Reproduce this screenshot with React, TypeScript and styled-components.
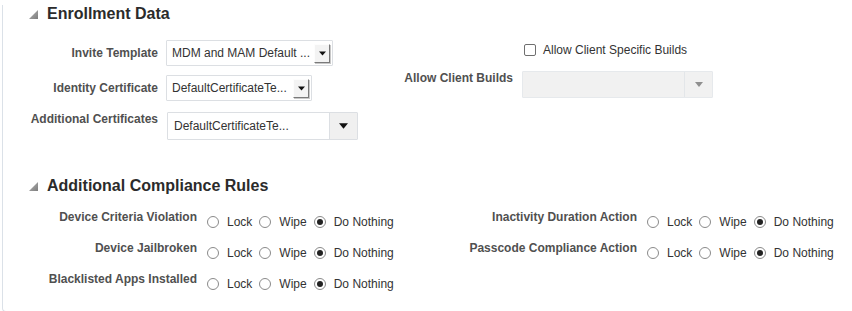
import React from "react";
import styled, { createGlobalStyle } from "styled-components";

const GlobalStyle = createGlobalStyle`
  html, body {
    margin: 0;
    padding: 0;
    background: #ffffff;
  }
  body {
    font-family: "Liberation Sans", Arial, sans-serif;
    font-size: 12px;
    color: #333333;
    overflow: hidden;
  }
`;

const RULES_LEFT = [
  "Device Criteria Violation",
  "Device Jailbroken",
  "Blacklisted Apps Installed"
];
const RULES_RIGHT = ["Inactivity Duration Action", "Passcode Compliance Action"];
const OPTIONS = ["Lock", "Wipe", "Do Nothing"];

const App = () => {
  return (
    <>
      <GlobalStyle />
      <StyledPanel>
        <StyledHeader>
          <Disclosure />
          <StyledTitle>Enrollment Data</StyledTitle>
        </StyledHeader>
        <StyledEnrollmentBody>
          <StyledFormBlock>
            <StyledFieldRow>
              <StyledLabel width={155}>Invite Template</StyledLabel>
              <StyledSelect width={167} height={26}>
                <StyledSelectText>MDM and MAM Default ...</StyledSelectText>
                <StyledBevelButton>
                  <Arrow size={7} color="#111" />
                </StyledBevelButton>
              </StyledSelect>
            </StyledFieldRow>
            <StyledFieldRow gap={9}>
              <StyledLabel width={155}>Identity Certificate</StyledLabel>
              <StyledSelect width={146} height={26}>
                <StyledSelectText>DefaultCertificateTe...</StyledSelectText>
                <StyledBevelButton>
                  <Arrow size={7} color="#111" />
                </StyledBevelButton>
              </StyledSelect>
            </StyledFieldRow>
            <StyledFieldRow gap={11} top>
              <StyledLabel width={155}>Additional Certificates</StyledLabel>
              <StyledSelect width={191} height={28} shift={1}>
                <StyledSelectText pad={6}>DefaultCertificateTe...</StyledSelectText>
                <StyledFlatButton>
                  <Arrow size={9} color="#111" />
                </StyledFlatButton>
              </StyledSelect>
            </StyledFieldRow>
          </StyledFormBlock>
          <StyledFormBlock>
            <StyledCheckRow>
              <StyledSpacer width={143} />
              <StyledCheckbox />
              <StyledCheckText>Allow Client Specific Builds</StyledCheckText>
            </StyledCheckRow>
            <StyledFieldRow gap={11} top>
              <StyledLabel width={132} right={9}>
                Allow Client Builds
              </StyledLabel>
              <StyledSelect width={191} height={27} disabled>
                <StyledSelectText />
                <StyledFlatButton disabled>
                  <Arrow size={8} color="#8f8f8f" />
                </StyledFlatButton>
              </StyledSelect>
            </StyledFieldRow>
          </StyledFormBlock>
        </StyledEnrollmentBody>

        <StyledHeader second>
          <Disclosure />
          <StyledTitle>Additional Compliance Rules</StyledTitle>
        </StyledHeader>
        <StyledRulesBody>
          <StyledRulesColumn width={417}>
            {RULES_LEFT.map(rule => (
              <RuleRow key={rule} label={rule} labelWidth={194} />
            ))}
          </StyledRulesColumn>
          <StyledRulesColumn>
            {RULES_RIGHT.map(rule => (
              <RuleRow key={rule} label={rule} labelWidth={217} />
            ))}
          </StyledRulesColumn>
        </StyledRulesBody>
      </StyledPanel>
    </>
  );
};

const RuleRow = ({ label, labelWidth }: { label: string; labelWidth: number }) => (
  <StyledRuleRow>
    <StyledLabel width={labelWidth} right={10}>
      {label}
    </StyledLabel>
    <StyledRadioGroup>
      {OPTIONS.map(opt => (
        <StyledOption key={opt}>
          <StyledRadio checked={opt === "Do Nothing"} />
          <StyledOptionText>{opt}</StyledOptionText>
        </StyledOption>
      ))}
    </StyledRadioGroup>
  </StyledRuleRow>
);

const Disclosure = () => (
  <svg width="9" height="9" viewBox="0 0 9 9" style={{ marginRight: 9 }}>
    <defs>
      <linearGradient id="disc" x1="0" y1="0" x2="1" y2="1">
        <stop offset="0" stopColor="#b5b5b5" />
        <stop offset="1" stopColor="#7d7d7d" />
      </linearGradient>
    </defs>
    <polygon points="9,0 9,9 0,9" fill="url(#disc)" />
  </svg>
);

const Arrow = ({ size, color }: { size: number; color: string }) => (
  <svg width={size} height={Math.ceil(size / 2) + 1} viewBox="0 0 10 6">
    <polygon points="0,0 10,0 5,6" fill={color} />
  </svg>
);

export default App;

const StyledPanel = styled.div`
  margin-left: 2px;
  border-left: 1px solid #dbe1e8;
  border-bottom: 1px solid #dbe1e8;
  border-bottom-left-radius: 4px;
  box-sizing: border-box;
  height: 307px;
`;

const StyledHeader = styled.div<{ second?: boolean }>`
  display: flex;
  align-items: center;
  padding-left: 26px;
  margin-top: ${p => (p.second ? "37px" : "5px")};
  height: 18px;
`;

const StyledTitle = styled.div`
  font-size: 16px;
  font-weight: 700;
  line-height: 18px;
  color: #2b2b2b;
`;

const StyledEnrollmentBody = styled.div`
  display: flex;
  gap: 23px;
  margin-top: 17px;
`;

const StyledFormBlock = styled.div`
  display: flex;
  flex-direction: column;
`;

const StyledFieldRow = styled.div<{ gap?: number; top?: boolean }>`
  display: flex;
  align-items: ${p => (p.top ? "flex-start" : "center")};
  margin-top: ${p => p.gap || 0}px;
`;

const StyledLabel = styled.div<{ width: number; right?: number }>`
  width: ${p => p.width}px;
  margin-right: ${p => (p.right !== undefined ? p.right : 8)}px;
  text-align: right;
  font-weight: 700;
  font-size: 12px;
  line-height: 14px;
  color: #505050;
  white-space: nowrap;
  flex-shrink: 0;
`;

const StyledSelect = styled.div<{
  width: number;
  height: number;
  shift?: number;
  disabled?: boolean;
}>`
  display: flex;
  align-items: center;
  box-sizing: border-box;
  width: ${p => p.width}px;
  height: ${p => p.height}px;
  margin-left: ${p => p.shift || 0}px;
  border: 1px solid ${p => (p.disabled ? "#e6e9ec" : "#dcdfe3")};
  background: ${p => (p.disabled ? "#f1f1f1" : "#ffffff")};
  border-radius: 1px;
`;

const StyledSelectText = styled.div<{ pad?: number }>`
  flex: 1;
  padding-left: ${p => p.pad || 5}px;
  font-size: 12px;
  color: #333;
  white-space: nowrap;
  overflow: hidden;
`;

const StyledBevelButton = styled.div`
  display: flex;
  align-items: center;
  justify-content: center;
  box-sizing: border-box;
  width: 16px;
  height: 19px;
  margin-right: 2px;
  background: #f3f3f3;
  border-top: 1px solid #fdfdfd;
  border-left: 1px solid #fdfdfd;
  border-right: 1px solid #7a7a7a;
  border-bottom: 1px solid #7a7a7a;
  box-shadow: 1px 1px 0 #c8c8c8;
`;

const StyledFlatButton = styled.div<{ disabled?: boolean }>`
  display: flex;
  align-items: center;
  justify-content: center;
  align-self: stretch;
  width: 27px;
  background: ${p => (p.disabled ? "#f1f1f1" : "#f0f0f0")};
  border-left: 1px solid ${p => (p.disabled ? "#e3e6e9" : "#dcdfe3")};
`;

const StyledCheckRow = styled.div`
  display: flex;
  align-items: center;
  height: 20px;
`;

const StyledSpacer = styled.div<{ width: number }>`
  width: ${p => p.width}px;
  flex-shrink: 0;
`;

const StyledCheckbox = styled.div`
  box-sizing: border-box;
  width: 12px;
  height: 12px;
  border: 1px solid #6f6f6f;
  border-radius: 2px;
  background: #fff;
`;

const StyledCheckText = styled.span`
  margin-left: 7px;
  font-size: 12px;
  color: #333;
  white-space: nowrap;
`;

const StyledRulesBody = styled.div`
  display: flex;
  margin-top: 15px;
`;

const StyledRulesColumn = styled.div<{ width?: number }>`
  display: flex;
  flex-direction: column;
  width: ${p => (p.width ? `${p.width}px` : "auto")};
  flex-shrink: 0;
`;

const StyledRuleRow = styled.div`
  display: flex;
  align-items: flex-start;
  height: 31px;
`;

const StyledRadioGroup = styled.div`
  display: flex;
  align-items: center;
  padding-top: 5px;
  line-height: 14px;
  white-space: nowrap;
`;

const StyledOption = styled.label`
  display: flex;
  align-items: center;
  margin-right: 7px;
  font-size: 12px;
  color: #333;
`;

const StyledOptionText = styled.span`
  margin-left: 8px;
`;

const StyledRadio = styled.span<{ checked?: boolean }>`
  position: relative;
  box-sizing: border-box;
  width: 12px;
  height: 12px;
  border: 1px solid #8a8a8a;
  border-radius: 50%;
  background: #fff;
  &::after {
    content: "";
    display: ${p => (p.checked ? "block" : "none")};
    position: absolute;
    left: 2px;
    top: 2px;
    width: 6px;
    height: 6px;
    border-radius: 50%;
    background: #222;
  }
`;
